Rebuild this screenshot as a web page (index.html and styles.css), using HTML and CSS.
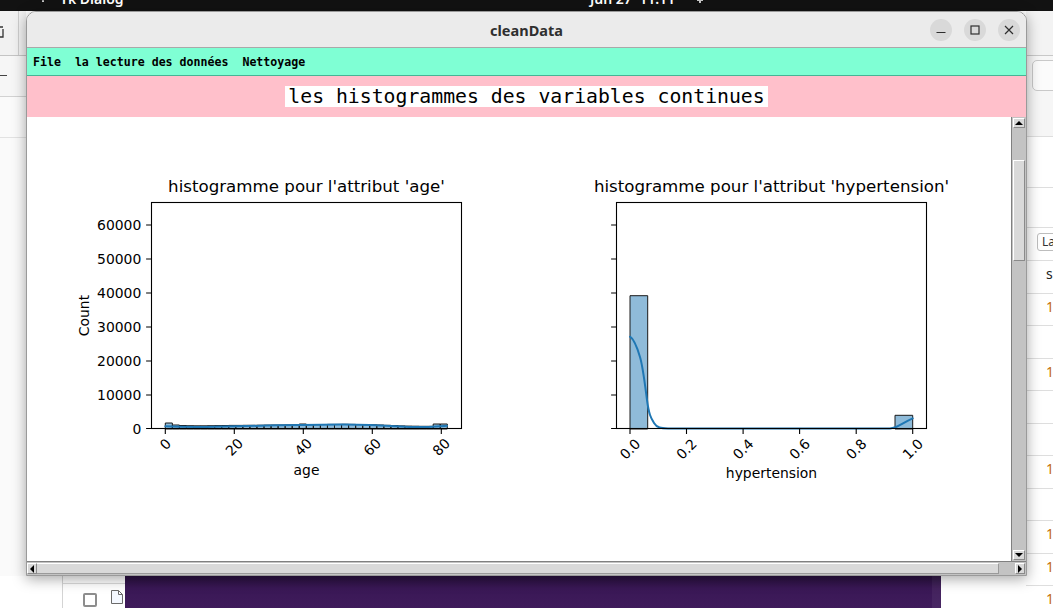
FILE: index.html
```html
<!DOCTYPE html>
<html lang="fr">
<head>
<meta charset="utf-8">
<title>cleanData</title>
<link rel="stylesheet" href="styles.css">
</head>
<body>
<div class="topbar">
  <svg class="tb-icon" width="8" height="11" viewBox="0 0 8 11"><path d="M1 0 L4 4 L7 0 M4 4 V6" /></svg>
  <span class="tb-app">Tk Dialog</span>
  <span class="tb-clock">Jun 27  11:11</span>
  <svg class="tb-bell" width="10" height="11" viewBox="0 0 10 11"><path d="M1 2 H9 M2 4 H8 M4 6 H6" /></svg>
</div>

<div class="bgapp">
  <div class="bg-left">
    <div class="bl-head"><div class="bl-vline"><svg class="bl-glyph" width="5" height="16" viewBox="0 0 5 16"><path d="M0 4 H3 M3 6 V14 H0" /></svg></div></div>
    <div class="bl-row1"><div class="bl-dash"></div></div>
    <div class="bl-row2"></div>
  </div>
  <div class="bg-bottom">
    <div class="bb-a"></div>
    <div class="bb-b">
      <div class="bb-line"></div>
      <div class="bb-items">
        <div class="bb-check"></div>
        <svg class="bb-file" width="12" height="14" viewBox="0 0 12 14"><path d="M0.5 0.5 H7.5 L11.5 4.5 V13.5 H0.5 Z M7.5 0.5 V4.5 H11.5" /></svg>
      </div>
    </div>
    <div class="bb-purple"><div class="bb-purple-edge"></div></div>
    <div class="bb-rest"></div>
  </div>
  <div class="bg-right">
    <div class="br-row r-head"></div>
    <div class="br-row r-tool"><div class="br-btn"></div></div>
    <div class="br-row r-a"></div>
    <div class="br-row r-b"></div>
    <div class="br-row r-c"><div class="br-input">La</div></div>
    <div class="br-row r-list"><span class="br-txt">s</span></div>
    <div class="br-row r-list"><span class="br-num">14</span></div>
    <div class="br-row r-list"></div>
    <div class="br-row r-list"><span class="br-num">14</span></div>
    <div class="br-row r-list"></div>
    <div class="br-row r-list"></div>
    <div class="br-row r-list"><span class="br-num">14</span></div>
    <div class="br-row r-list"></div>
    <div class="br-row r-list"><span class="br-num">14</span></div>
    <div class="br-row r-list"><span class="br-num">14</span></div>
    <div class="br-row r-list"><span class="br-num">14</span></div>
  </div>
</div>

<div class="window">
  <div class="titlebar">
    <div class="tb-side"></div>
    <div class="win-title">cleanData</div>
    <div class="tb-side tb-buttons">
      <div class="wbtn"><svg width="10" height="10" viewBox="0 0 10 10"><path d="M0.5 7.5 H9.5" /></svg></div>
      <div class="wbtn"><svg width="10" height="10" viewBox="0 0 10 10"><rect x="1" y="1" width="8" height="8" /></svg></div>
      <div class="wbtn"><svg width="10" height="10" viewBox="0 0 10 10"><path d="M1 1 L9 9 M9 1 L1 9" /></svg></div>
    </div>
  </div>

  <div class="menubar">File  la lecture des données  Nettoyage</div>

  <div class="banner"><span class="banner-label">les histogrammes des variables continues</span></div>

  <div class="content">
    <div class="canvas">
      <svg class="fig" width="984" height="444" viewBox="27 117 984 444">
        <!-- left axes -->
        <text class="ax-title" x="306.5" y="192" text-anchor="middle">histogramme pour l'attribut 'age'</text>
        <path class="bars" d="M165.3 429v-6h7.05v6z m7.05 0v-4h7.05v4z m7.05 0v-3.5h7.05v3.5z m7.05 0v-3.3h7.05v3.3z m7.05 0v-3.2h7.05v3.2z m7.05 0v-3.2h7.05v3.2z m7.05 0v-3.3h7.05v3.3z m7.05 0v-3.4h7.05v3.4z m7.05 0v-3.5h7.05v3.5z m7.05 0v-3.6h7.05v3.6z m7.05 0v-3.6h7.05v3.6z m7.05 0v-3.7h7.05v3.7z m7.05 0v-3.7h7.05v3.7z m7.05 0v-3.8h7.05v3.8z m7.05 0v-3.9h7.05v3.9z m7.05 0v-4h7.05v4z m7.05 0v-4h7.05v4z m7.05 0v-4.1h7.05v4.1z m7.05 0v-4.2h7.05v4.2z m7.05 0v-5h7.05v5z m7.05 0v-4.3h7.05v4.3z m7.05 0v-4.4h7.05v4.4z m7.05 0v-4.5h7.05v4.5z m7.05 0v-4.6h7.05v4.6z m7.05 0v-4.6h7.05v4.6z m7.05 0v-4.7h7.05v4.7z m7.05 0v-4.6h7.05v4.6z m7.05 0v-4.5h7.05v4.5z m7.05 0v-4.4h7.05v4.4z m7.05 0v-4.2h7.05v4.2z m7.05 0v-4h7.05v4z m7.05 0v-3.7h7.05v3.7z m7.05 0v-3.4h7.05v3.4z m7.05 0v-3.1h7.05v3.1z m7.05 0v-2.9h7.05v2.9z m7.05 0v-2.8h7.05v2.8z m7.05 0v-2.7h7.05v2.7z m7.05 0v-2.7h7.05v2.7z m7.05 0v-5h7.05v5z m7.05 0v-5h7.05v5z" />
        <path class="kde" d="M165.3 426.3 C180 427 195 427.3 215 426.8 S300 424.8 340 424.6 S395 426.5 412 427 S440 426 447 425.8" />
        <rect class="spine" x="151.5" y="202.5" width="310" height="226" />
        <path class="tick" d="M146.1 428.5H151 M146.1 395H151 M146.1 361H151 M146.1 327H151 M146.1 293H151 M146.1 259H151 M146.1 225H151 M165.3 429V434 M234.3 429V434 M303.3 429V434 M372.3 429V434 M441.3 429V434" />
        <text class="tl" x="141.3" y="434" text-anchor="end">0</text>
        <text class="tl" x="141.3" y="400" text-anchor="end">10000</text>
        <text class="tl" x="141.3" y="366" text-anchor="end">20000</text>
        <text class="tl" x="141.3" y="332" text-anchor="end">30000</text>
        <text class="tl" x="141.3" y="298" text-anchor="end">40000</text>
        <text class="tl" x="141.3" y="264" text-anchor="end">50000</text>
        <text class="tl" x="141.3" y="230" text-anchor="end">60000</text>
        <text class="tl" x="165.3" y="449" text-anchor="middle" transform="rotate(-45 165.3 444)">0</text>
        <text class="tl" x="234.3" y="452" text-anchor="middle" transform="rotate(-45 234.3 447)">20</text>
        <text class="tl" x="303.3" y="452" text-anchor="middle" transform="rotate(-45 303.3 447)">40</text>
        <text class="tl" x="372.3" y="452" text-anchor="middle" transform="rotate(-45 372.3 447)">60</text>
        <text class="tl" x="441.3" y="452" text-anchor="middle" transform="rotate(-45 441.3 447)">80</text>
        <text class="al" x="306.5" y="475" text-anchor="middle">age</text>
        <text class="al" x="83.5" y="320.5" text-anchor="middle" transform="rotate(-90 83.5 315.5)">Count</text>

        <!-- right axes -->
        <text class="ax-title" x="771.5" y="192" text-anchor="middle">histogramme pour l'attribut 'hypertension'</text>
        <path class="bars" d="M630 429V295.7H647.7V429z M895 429V415.3H912.7V429z" />
        <path class="kde" d="M630 336.7 C633 338.5 637 347 640 357 S645 385 647 400 S651 418 654 423 S661 428.3 668 428.4 L890 428.4 C897 428.2 902 423 912.7 418.3" />
        <rect class="spine" x="616.5" y="202.5" width="310" height="226" />
        <path class="tick" d="M611.1 428.5H616 M611.1 395H616 M611.1 361H616 M611.1 327H616 M611.1 293H616 M611.1 259H616 M611.1 225H616 M630 429V434 M686.5 429V434 M743.1 429V434 M799.6 429V434 M856.2 429V434 M912.7 429V434" />
        <text class="tl" x="630" y="454" text-anchor="middle" transform="rotate(-45 630 449)">0.0</text>
        <text class="tl" x="686.5" y="454" text-anchor="middle" transform="rotate(-45 686.5 449)">0.2</text>
        <text class="tl" x="743.1" y="454" text-anchor="middle" transform="rotate(-45 743.1 449)">0.4</text>
        <text class="tl" x="799.6" y="454" text-anchor="middle" transform="rotate(-45 799.6 449)">0.6</text>
        <text class="tl" x="856.2" y="454" text-anchor="middle" transform="rotate(-45 856.2 449)">0.8</text>
        <text class="tl" x="912.7" y="454" text-anchor="middle" transform="rotate(-45 912.7 449)">1.0</text>
        <text class="al" x="771.5" y="478" text-anchor="middle">hypertension</text>
      </svg>
    </div>
    <div class="vscroll">
      <div class="sb-btn"><span class="tri-up"></span></div>
      <div class="vthumb"></div>
      <div class="sb-fill"></div>
      <div class="sb-btn"><span class="tri-down"></span></div>
    </div>
  </div>

  <div class="hscroll">
    <div class="sb-btn sb-h"><span class="tri-left"></span></div>
    <div class="hthumb"></div>
    <div class="htrough"></div>
    <div class="sb-btn sb-h"><span class="tri-right"></span></div>
  </div>
</div>
</body>
</html>
```

FILE: styles.css
```css
* { box-sizing: border-box; }
html, body { margin: 0; padding: 0; }
body {
  width: 1053px;
  height: 608px;
  overflow: hidden;
  position: relative;
  background: #ffffff;
  font-family: "Noto Sans", "DejaVu Sans", sans-serif;
}

/* ---------- top bar ---------- */
.topbar {
  position: absolute;
  left: 0; top: 0;
  width: 1053px;
  height: 11px;
  background: #121212;
  overflow: hidden;
  display: grid;
  grid-template-columns: 38px 22px 530px 105px auto;
  color: #ffffff;
  font-size: 14px;
  font-weight: 600;
  line-height: 20px;
}
.tb-icon { grid-column: 2; margin-left: 1px; margin-top: -4px; fill: none; stroke: #fff; stroke-width: 1.5; }
.tb-app { grid-column: 3; margin-top: -11px; white-space: pre; }
.tb-clock { grid-column: 4; margin-top: -11px; white-space: pre; }
.tb-bell { grid-column: 5; margin-top: -4px; fill: none; stroke: #fff; stroke-width: 1.3; }

/* ---------- background application ---------- */
.bgapp {
  position: absolute;
  left: 0; top: 11px;
  width: 1053px;
  height: 597px;
  display: grid;
  grid-template-columns: 26px 1000px 27px;
  grid-template-rows: 565px 32px;
}
.bg-left { grid-column: 1; grid-row: 1; display: flex; flex-direction: column; background: #fafafa; }
.bl-head { height: 45px; border-bottom: 1px solid #c4c4c4; background: #f1f1f1; display: flex; }
.bl-vline { width: 19px; border-right: 1px solid #cdcdcd; height: 100%; padding-top: 12px; }
.bl-glyph { display: block; fill: none; stroke: #333; stroke-width: 1.3; }
.bl-row1 { height: 41px; border-bottom: 1px solid #d2d2d2; background: #f6f6f6; padding-top: 19px; }
.bl-dash { width: 7px; height: 1px; background: #444; }
.bl-row2 { height: 41px; border-bottom: 1px solid #e2e2e2; }

.bg-bottom { grid-column: 1 / 3; grid-row: 2; display: flex; background: #fff; }
.bb-a { width: 63px; border-right: 1px solid #d4d4d4; }
.bb-b { width: 62px; display: flex; flex-direction: column; }
.bb-line { margin-top: 7px; border-top: 1px solid #dadada; }
.bb-items { display: flex; align-items: flex-start; }
.bb-check { width: 14px; height: 14px; margin-left: 20px; margin-top: 9px; border: 2px solid #8d8d8d; border-radius: 2px; }
.bb-file { margin-left: 14px; margin-top: 6px; fill: #f4f8ff; stroke: #6a6a6a; stroke-width: 1; }
.bb-purple {
  width: 816px;
  background: linear-gradient(to bottom, #2a1140 0%, #3a1856 40%, #3f1b5b 100%);
  display: flex;
  justify-content: flex-end;
}
.bb-purple-edge { width: 9px; background: rgba(255,255,255,0.05); }
.bb-rest { flex: 1; }

.bg-right {
  grid-column: 3; grid-row: 1 / 3;
  display: flex; flex-direction: column;
  overflow: hidden;
  background: #fff;
  font-size: 14px;
}
.br-row { border-bottom: 1px solid #dedede; flex: none; }
.r-head { height: 45px; background: #f3f3f3; border-bottom-color: #c8c8c8; }
.r-tool { height: 81px; background: #f6f6f6; padding: 4px 0 0 6px; }
.br-btn { width: 30px; height: 31px; border: 1px solid #c9c9c9; border-radius: 5px; background: #fbfbfb; }
.r-a { height: 51px; }
.r-b { height: 40px; }
.r-c { height: 33px; padding: 5px 0 0 11px; }
.br-input {
  width: 30px; height: 18px;
  border: 1px solid #bdbdbd; border-radius: 3px;
  font-size: 12px; line-height: 16px; color: #333; padding-left: 4px;
}
.r-list { height: 32.5px; display: flex; align-items: center; padding: 0 0 6px 20px; }
.br-txt { color: #222; }
.br-num { color: #c46e0c; }

/* ---------- window ---------- */
.window {
  position: absolute;
  left: 26px; top: 11px;
  width: 1001px; height: 565px;
  background: #ffffff;
  border: 1px solid #9a9a9a;
  border-radius: 10px 10px 0 0;
  box-shadow: 0 3px 14px rgba(0,0,0,0.35);
  display: flex;
  flex-direction: column;
  overflow: hidden;
}
.titlebar {
  height: 35px;
  flex: none;
  background: #ebebeb;
  display: grid;
  grid-template-columns: 1fr auto 1fr;
  align-items: center;
}
.win-title {
  font-family: "Noto Sans", "DejaVu Sans", sans-serif;
  font-weight: 700;
  font-size: 14.5px;
  color: #2f2f2f;
  padding-top: 1px;
}
.tb-buttons { display: flex; justify-content: flex-end; gap: 12px; padding-right: 6px; }
.wbtn {
  width: 22px; height: 22px;
  border-radius: 50%;
  background: #d9d9d9;
  display: flex; align-items: center; justify-content: center;
}
.wbtn svg { fill: none; stroke: #2e2e2e; stroke-width: 1.2; }

.menubar {
  height: 29px;
  flex: none;
  background: #7fffd4;
  border-top: 1px solid #a9a9a9;
  border-bottom: 1px solid #45b596;
  padding-left: 6px;
  font-family: "DejaVu Sans Mono", "Liberation Mono", monospace;
  font-weight: 700;
  font-size: 11.6px;
  line-height: 28px;
  color: #000;
  white-space: pre;
}

.banner {
  height: 41px;
  flex: none;
  background: #ffc0cb;
  display: flex;
  align-items: center;
  justify-content: center;
}
.banner-label {
  background: #ffffff;
  font-family: "DejaVu Sans Mono", "Liberation Mono", monospace;
  font-size: 19.8px;
  line-height: 21px;
  height: 21px;
  padding: 0 3px;
  color: #000;
  white-space: pre;
}

.content { height: 444px; flex: none; display: flex; }
.canvas { width: 984px; height: 444px; background: #fff; overflow: hidden; }
.fig { display: block; }
.fig text { font-family: "DejaVu Sans", sans-serif; fill: #000; }
.fig .tl { font-size: 13.9px; }
.fig .al { font-size: 13.9px; }
.fig .ax-title { font-size: 16.67px; }
.fig .bars { fill: #8fbbd9; stroke: #1a1a1a; stroke-width: 1; }
.fig .kde { fill: none; stroke: #1f77b4; stroke-width: 2; stroke-linecap: round; }
.fig .spine { fill: none; stroke: #000; stroke-width: 1.1; }
.fig .tick { fill: none; stroke: #000; stroke-width: 1.1; }

/* ---------- scrollbars ---------- */
.vscroll {
  width: 15px;
  flex: none;
  background: #c3c3c3;
  border-left: 1px solid #808080;
  display: flex;
  flex-direction: column;
  padding: 1px 1px 1px 1px;
}
.sb-btn {
  height: 10px;
  flex: none;
  background: #d9d9d9;
  border-top: 1px solid #fff;
  border-left: 1px solid #fff;
  border-bottom: 1px solid #8a8a8a;
  border-right: 1px solid #8a8a8a;
  display: flex; align-items: center; justify-content: center;
}
.vthumb {
  height: 101px;
  margin-top: 32px;
  flex: none;
  background: #d9d9d9;
  border-top: 1px solid #fff;
  border-left: 1px solid #fff;
  border-bottom: 1px solid #8a8a8a;
  border-right: 1px solid #8a8a8a;
}
.sb-fill { flex: 1; }
.tri-up { width: 0; height: 0; border-left: 4px solid transparent; border-right: 4px solid transparent; border-bottom: 4px solid #000; }
.tri-down { width: 0; height: 0; border-left: 4px solid transparent; border-right: 4px solid transparent; border-top: 4px solid #000; }
.tri-left { width: 0; height: 0; border-top: 4px solid transparent; border-bottom: 4px solid transparent; border-right: 4px solid #000; }
.tri-right { width: 0; height: 0; border-top: 4px solid transparent; border-bottom: 4px solid transparent; border-left: 4px solid #000; }

.hscroll {
  height: 14px;
  flex: none;
  background: #c3c3c3;
  border-top: 1px solid #808080;
  display: flex;
  padding: 1px 1px 1px 0;
}
.sb-h { width: 10px; height: 11px; }
.hthumb {
  width: 962px;
  flex: none;
  background: #d9d9d9;
  border-top: 1px solid #fff;
  border-bottom: 1px solid #9a9a9a;
  border-right: 1px solid #9a9a9a;
}
.htrough { flex: 1; }
```
